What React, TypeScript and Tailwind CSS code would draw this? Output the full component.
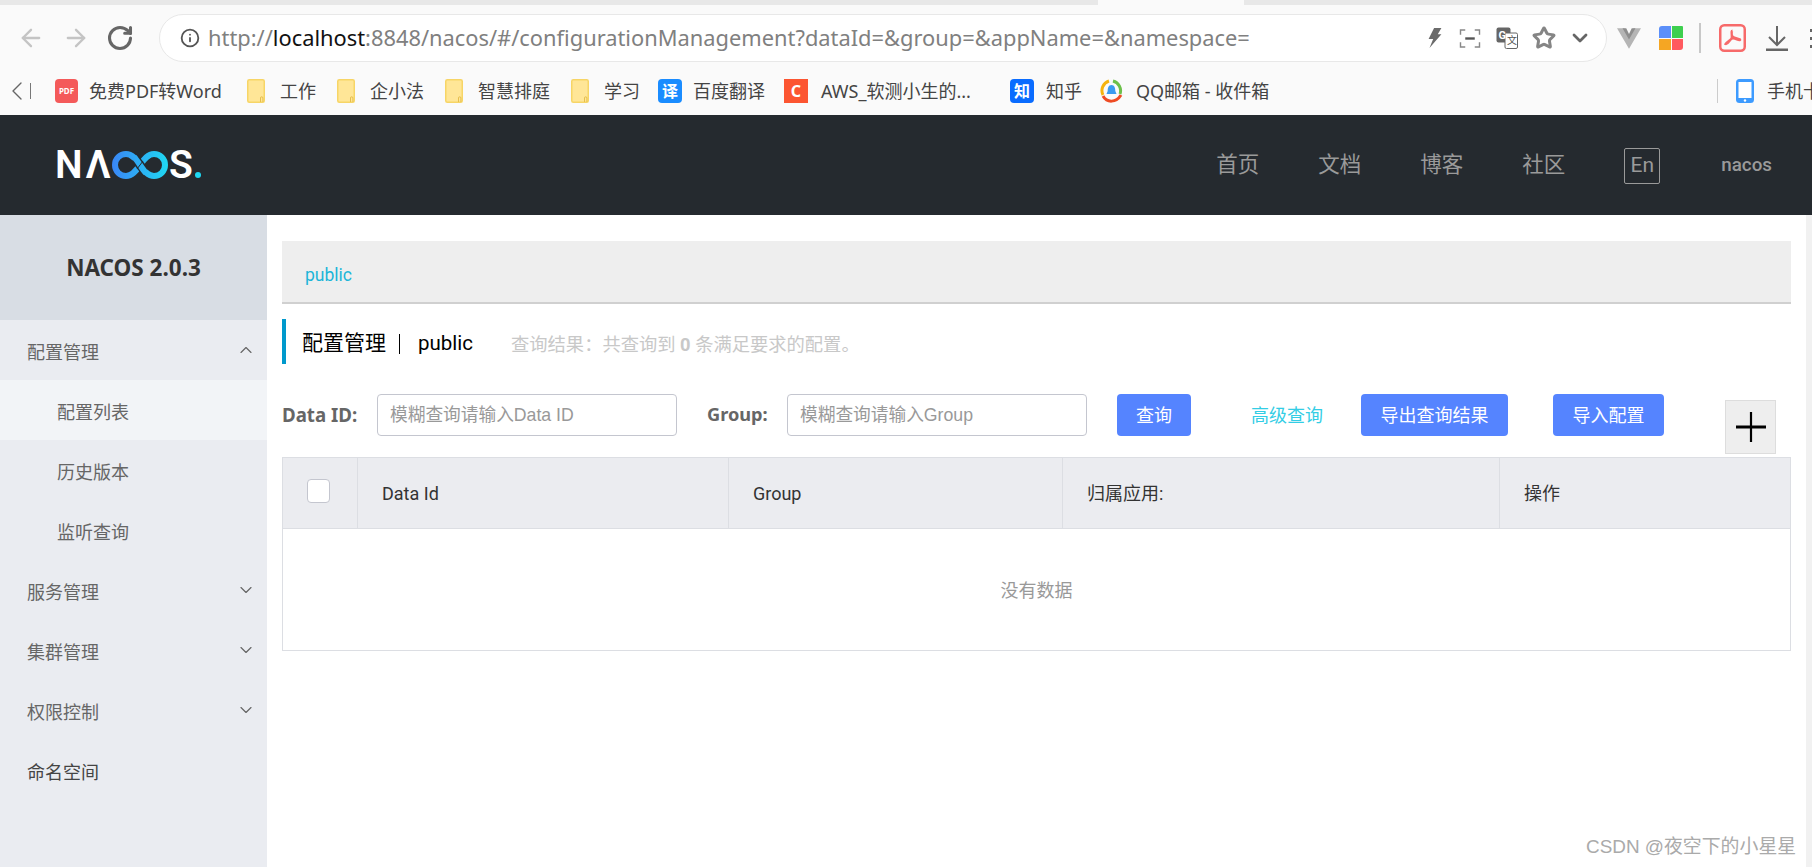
import React from "react";
import { ArrowLeft, ArrowRight, ChevronDown, ChevronLeft, ChevronUp, Info, RotateCw, Star } from "lucide-react";

const Folder = () => (
  <svg width="18" height="24" viewBox="0 0 18 24" className="shrink-0">
    <rect x="0.75" y="0.75" width="16.5" height="22.5" rx="1.5" fill="#ffe697" stroke="#f7d566" strokeWidth="1.5" />
    <path d="M13.5 23v-4a1.2 1.2 0 0 1 2.4 0v4" fill="none" stroke="#e6bf4d" strokeWidth="1" />
  </svg>
);

const PdfIcon = () => (
  <div className="flex h-[24px] w-[23px] shrink-0 items-center justify-center rounded-[4px] bg-[#f45a5a] text-[8px] font-bold text-white">
    PDF
  </div>
);

const SquareIcon = ({ label, className }: { label: string; className: string }) => (
  <div className={`flex h-[24px] w-[24px] shrink-0 items-center justify-center text-[16px] font-bold text-white ${className}`}>
    {label}
  </div>
);

const QQIcon = () => (
  <svg width="23" height="24" viewBox="0 0 23 24" className="shrink-0">
    <path d="M3 16A10 10 0 0 1 9 2" fill="none" stroke="#f5b30f" strokeWidth="3" />
    <path d="M13 2a10 10 0 0 1 7 13" fill="none" stroke="#6cc04a" strokeWidth="3" />
    <path d="M3 17c4 7 13 7 18-1" fill="none" stroke="#ee4b23" strokeWidth="3" />
    <path d="M11.5 6c3 0 3.8 3 3.8 6l1.2 3h-10l1.2-3c0-3 .8-6 3.8-6z" fill="#3a9bf0" />
  </svg>
);

const PhoneIcon = () => (
  <svg width="18" height="24" viewBox="0 0 18 24" className="shrink-0">
    <rect x="0" y="0" width="18" height="24" rx="3.5" fill="#3d9bff" />
    <rect x="2.5" y="3" width="13" height="16" fill="#fff" />
    <circle cx="9" cy="21.5" r="1.2" fill="#fff" />
  </svg>
);

const bookmarks = [
  { icon: <PdfIcon />, label: "免费PDF转Word", cls: "w-[192px] gap-[11px]" },
  { icon: <Folder />, label: "工作", cls: "w-[90px] gap-[15px]" },
  { icon: <Folder />, label: "企小法", cls: "w-[108px] gap-[15px]" },
  { icon: <Folder />, label: "智慧排庭", cls: "w-[126px] gap-[15px]" },
  { icon: <Folder />, label: "学习", cls: "w-[87px] gap-[15px]" },
  { icon: <SquareIcon label="译" className="rounded-[4px] bg-[#1a8cff]" />, label: "百度翻译", cls: "w-[126px] gap-[11px]" },
  { icon: <SquareIcon label="C" className="bg-[#fc5531]" />, label: "AWS_软测小生的...", cls: "w-[226px] gap-[13px]" },
  { icon: <SquareIcon label="知" className="rounded-[4px] bg-[#0a6cff]" />, label: "知乎", cls: "w-[90px] gap-[12px]" },
  { icon: <QQIcon />, label: "QQ邮箱 - 收件箱", cls: "w-[173px] gap-[13px]" },
];

const BrowserChrome = () => (
  <div className="shrink-0 bg-[#fafafa] font-['Noto_Sans','Noto_Sans_CJK_SC',sans-serif]">
    <div className="flex h-[5px]">
      <div className="w-[1098px] bg-[#e8e8e8]" />
      <div className="w-[146px] bg-[#fafafa]" />
      <div className="flex-1 bg-[#e8e8e8]" />
    </div>
    <div className="flex h-[57px] items-start">
      <div className="mt-[9px] flex h-[47px] w-[159px] shrink-0 items-center pl-[17px]">
        <ArrowLeft size={28} strokeWidth={2} className="text-[#c4c4c4]" />
        <ArrowRight size={28} strokeWidth={2} className="ml-[17px] text-[#c4c4c4]" />
        <RotateCw size={28} strokeWidth={2.6} className="ml-[16px] text-[#666]" />
      </div>
      <div className="mt-[9px] flex h-[48px] w-[1448px] shrink-0 items-center rounded-full border border-[#e8e8e8] bg-white pl-[20px]">
        <Info size={20} strokeWidth={2.2} className="shrink-0 text-[#555]" />
        <div className="ml-[8px] whitespace-nowrap text-[21.85px] text-[#808080]">
          http://<span className="text-[#111]">localhost</span>:8848/nacos/#/configurationManagement?dataId=&group=&appName=&namespace=
        </div>
      </div>
    </div>
    <div className="relative flex h-[53px] items-center overflow-hidden pt-[5px] text-[18px] text-[#444]">
      <div className="ml-[13px] flex w-[42px] shrink-0 items-center">
        <ChevronLeft size={32} strokeWidth={1} className="-ml-[12px] shrink-0 text-[#666]" />
        <span className="-ml-[3px] h-[16px] w-[1px] shrink-0 bg-[#777]" />
      </div>
      {bookmarks.map((b) => (
        <div key={b.label} className={`flex shrink-0 items-center whitespace-nowrap ${b.cls}`}>
          {b.icon}
          <span>{b.label}</span>
        </div>
      ))}
      <div className="ml-[444px] flex shrink-0 items-center whitespace-nowrap">
        <span className="h-[24px] w-[1px] bg-[#ccc]" />
        <span className="ml-[18px]"><PhoneIcon /></span>
        <span className="ml-[13px]">手机卡</span>
      </div>
    </div>
  </div>
);

const ToolbarIcons = () => (
  <div className="absolute left-[1427px] top-[14px] flex h-[48px] items-center">
    <svg width="16" height="22" viewBox="0 0 16 24">
      <polygon points="2,23 6,13 1,13 7,1 15,1 11,8 15,8" fill="#6b6b6b" />
    </svg>
    <svg width="22" height="19" viewBox="0 0 22 20" fill="none" stroke="#888" strokeWidth="1.5" className="ml-[16px]">
      <path d="M1 6V1h5M16 1h5v5M1 14v5h5M21 14v5h-5" />
      <path d="M6 10h10" stroke="#555" strokeWidth="2.5" />
    </svg>
    <svg width="22" height="22" viewBox="0 0 22 22" className="ml-[15px]">
      <rect x="0.5" y="0.5" width="14" height="15" rx="2" fill="#666" />
      <rect x="9" y="6" width="12.5" height="15.5" rx="1.5" fill="#fff" stroke="#666" />
      <text x="2.5" y="11.5" fontSize="11" fontWeight="700" fill="#fff" fontFamily="Roboto">G</text>
      <text x="11" y="17" fontSize="10" fill="#555" fontFamily="Noto Sans CJK SC">文</text>
    </svg>
    <Star size={24} strokeWidth={3} className="ml-[14px] text-[#858585]" />
    <ChevronDown size={24} strokeWidth={2.8} className="ml-[12px] text-[#666]" />
  </div>
);

const ExtensionIcons = () => (
  <div className="absolute left-[1617px] top-[23px] flex h-[30px] items-center">
    <svg width="24" height="21" viewBox="0 0 26 22">
      <polygon points="0,0 8,0 13,9 18,0 26,0 13,22" fill="#b5b5b5" />
      <polygon points="6,0 10,0 13,6 16,0 20,0 13,12" fill="#8e8e8e" />
    </svg>
    <div className="ml-[18px] grid h-[24px] w-[24px] grid-cols-2 gap-[1px]">
      <span className="rounded-tl-[3px] bg-[#5b8ff9]" />
      <span className="rounded-tr-[1px] bg-[#3ecf4f]" />
      <span className="bg-[#f5a623]" />
      <span className="rounded-br-[3px] bg-[#ff5a5f]" />
    </div>
    <span className="ml-[16px] h-[30px] w-[2px] bg-[#c8c8c8]" />
    <svg width="27" height="28" viewBox="0 0 27 28" className="ml-[18px]" fill="none" stroke="#f76a6a">
      <rect x="1.25" y="1.25" width="24.5" height="25.5" rx="4" strokeWidth="2.5" />
      <path d="M13.5 6.5c-2 0 0 6-1 8s-5 3-6 5.5c3 1 4-5 7-5.5s6 2.5 7.5 1.5-6-1.500-7.500-3.500-.5-6 0-6z" strokeWidth="2.2" />
    </svg>
    <svg width="22" height="26" viewBox="0 0 22 26" className="ml-[20px]" fill="none" stroke="#666">
      <path d="M11 1v18M3 12l8 8 8-8" strokeWidth="2" />
      <path d="M0 25h22" strokeWidth="3" />
    </svg>
    <span className="ml-[22px] flex flex-col gap-[5px]">
      <span className="h-[3px] w-[3px] bg-[#666]" />
      <span className="h-[3px] w-[3px] bg-[#666]" />
      <span className="h-[3px] w-[3px] bg-[#666]" />
    </span>
  </div>
);

const Logo = () => (
  <div className="ml-[55px] flex h-[28px] items-center text-[39px] font-semibold leading-none text-white">
    <span className="w-[57px] shrink-0 tracking-[3px]">NΛ</span>
    <svg width="56" height="28" viewBox="0 0 56 28" className="shrink-0" fill="none">
      <defs>
        <linearGradient id="inf" gradientUnits="userSpaceOnUse" x1="0" x2="56" y1="0" y2="0">
          <stop offset="0" stopColor="#3a86f6" />
          <stop offset="1" stopColor="#1fd8f2" />
        </linearGradient>
      </defs>
      <path d="M28 14C24 8 20 3 14 3a11 11 0 0 0 0 22c6 0 10-5 14-11s8-11 14-11a11 11 0 0 1 0 22c-6 0-10-5-14-11z" stroke="url(#inf)" strokeWidth="6" />
      <path d="M23 7.500l10 13" stroke="#252a2f" strokeWidth="9" />
      <path d="M22 6C24 8 26 11 28 14s4 6 6 8" stroke="url(#inf)" strokeWidth="6" />
      <path d="M25 18c1-1.300 2-2.600 3-4s2-2.700 3-4" stroke="#252a2f" strokeWidth="1" />
    </svg>
    <span className="ml-[1px]">S</span>
    <span className="ml-[2px] mt-[19px] h-[6px] w-[6px] rounded-full bg-[#1fd8f2]" />
  </div>
);

const TopNav = () => (
  <header className="flex h-[100px] shrink-0 items-center bg-[#252a2f]">
    <Logo />
    <nav className="ml-auto flex items-center gap-[59px] pr-[40px] pt-[1px] text-[#9a9a9a]">
      <a className="text-[21.5px]">首页</a>
      <a className="text-[21.5px]">文档</a>
      <a className="text-[21.5px]">博客</a>
      <a className="text-[21.5px]">社区</a>
      <a className="flex h-[36px] w-[36px] items-center justify-center rounded-[2px] border border-[#9a9a9a] text-[21px]">En</a>
      <a className="ml-[2px] text-[18.8px] font-medium">nacos</a>
    </nav>
  </header>
);

const menu = [
  { label: "配置管理", chevron: "up" },
  { label: "配置列表", sub: true, active: true },
  { label: "历史版本", sub: true },
  { label: "监听查询", sub: true },
  { label: "服务管理", chevron: "down" },
  { label: "集群管理", chevron: "down" },
  { label: "权限控制", chevron: "down" },
  { label: "命名空间", dark: true },
];

const Sidebar = () => (
  <aside className="w-[267px] shrink-0 bg-[#eaecf1]">
    <div className="flex h-[105px] items-center justify-center bg-[#d8dde4] pt-[1px] font-['Noto_Sans',sans-serif] text-[22.5px] font-bold text-[#333]">NACOS 2.0.3</div>
    {menu.map((m) => (
      <div
        key={m.label}
        className={`flex h-[60px] items-center text-[18px] ${m.sub ? "pl-[57px]" : "pl-[27px]"} ${m.active ? "bg-[#f2f4f7]" : ""} ${m.dark ? "text-[#444]" : "text-[#666]"}`}
      >
        <span className="mt-[4px]">{m.label}</span>
        {m.chevron === "up" && <ChevronUp size={20} strokeWidth={1.4} className="ml-auto mr-[11px] text-[#666]" />}
        {m.chevron === "down" && <ChevronDown size={20} strokeWidth={1.4} className="ml-auto mr-[11px] text-[#666]" />}
      </div>
    ))}
  </aside>
);

const FormInput = ({ placeholder }: { placeholder: string }) => (
  <div className="flex h-[42px] w-[300px] shrink-0 items-center rounded-[4px] border border-[#c4c6cf] bg-white pl-[12px] font-['Liberation_Sans','Noto_Sans_CJK_SC',sans-serif] text-[17.7px] text-[#999]">
    {placeholder}
  </div>
);

const BlueButton = ({ label, className }: { label: string; className: string }) => (
  <button className={`flex h-[42px] shrink-0 items-center justify-center rounded-[4px] bg-[#5584ff] text-[18px] text-white ${className}`}>
    {label}
  </button>
);

const columns = [
  { label: "Data Id", cls: "w-[371px]" },
  { label: "Group", cls: "w-[334px]" },
  { label: "归属应用:", cls: "w-[437px]" },
  { label: "操作", cls: "flex-1" },
];

const Main = () => (
  <main className="flex-1 pl-[15px] pr-[15px] pt-[26px]">
    <div className="flex h-[63px] items-center border-b-2 border-[#d0d0d0] bg-[#eeeeee] pl-[23px] text-[17.5px] text-[#1cb5d8]">
      <span className="mt-[7px]">public</span>
    </div>
    <div className="mt-[15px] flex h-[45px] items-center border-l-4 border-[#09c] pl-[16px] pt-[4px]">
      <span className="text-[21px] text-[#000]">配置管理</span>
      <span className="ml-[13px] h-[20px] w-[1px] bg-[#000]" />
      <span className="ml-[18px] text-[20.5px] text-[#000]">public</span>
      <span className="ml-[38px] mt-[2px] text-[18.3px] text-[#c8c8c8]">
        查询结果：共查询到 <b className="font-bold">0</b> 条满足要求的配置。
      </span>
    </div>
    <div className="mt-[30px] flex h-[42px] items-start">
      <label className="flex h-[42px] w-[95px] shrink-0 items-center font-['Noto_Sans',sans-serif] text-[18.7px] font-bold text-[#666]">Data ID:</label>
      <FormInput placeholder="模糊查询请输入Data ID" />
      <label className="ml-[30px] flex h-[42px] w-[80px] shrink-0 items-center font-['Noto_Sans',sans-serif] text-[18.2px] font-bold text-[#666]">Group:</label>
      <FormInput placeholder="模糊查询请输入Group" />
      <BlueButton label="查询" className="ml-[30px] w-[74px]" />
      <a className="ml-[60px] flex h-[42px] shrink-0 items-center text-[18px] text-[#33cde5]">高级查询</a>
      <BlueButton label="导出查询结果" className="ml-[38px] w-[147px]" />
      <BlueButton label="导入配置" className="ml-[45px] w-[111px]" />
      <div className="ml-[61px] mt-[6px] flex h-[54px] w-[51px] shrink-0 items-center justify-center border border-[#ddd] bg-[#eee]">
        <svg width="32" height="32" viewBox="0 0 32 32" stroke="#000">
          <path d="M1 16h30" strokeWidth="3" />
          <path d="M16 1v30" strokeWidth="2.2" />
        </svg>
      </div>
    </div>
    <div className="mt-[21px] border border-[#dcdee3]">
      <div className="flex h-[71px] items-stretch border-b border-[#dcdee3] bg-[#ebecf0] text-[18px] text-[#333]">
        <div className="flex w-[74px] shrink-0 items-center pb-[5px] pl-[24px]">
          <span className="block h-[24px] w-[23px] rounded-[4px] border border-[#c4c6cf] bg-white" />
        </div>
        {columns.map((c) => (
          <div key={c.label} className={`flex shrink-0 items-center border-l border-[#dcdee3] pl-[24px] ${c.cls}`}>
            {c.label}
          </div>
        ))}
      </div>
      <div className="flex h-[121px] items-center justify-center pt-[1px] text-[18px] text-[#999]">没有数据</div>
    </div>
  </main>
);

export default function App() {
  return (
    <div className="relative flex h-[867px] w-[1812px] flex-col overflow-hidden bg-white font-['Roboto','Noto_Sans_CJK_SC',sans-serif]">
      <BrowserChrome />
      <ToolbarIcons />
      <ExtensionIcons />
      <TopNav />
      <div className="flex flex-1">
        <Sidebar />
        <Main />
        <div className="w-[6px] shrink-0 bg-[#f1f1f1]" />
      </div>
      <div className="absolute left-[1586px] top-[833px] font-['Liberation_Sans','Noto_Sans_CJK_SC',sans-serif] text-[18.9px] text-[#aaa]">CSDN @夜空下的小星星</div>
    </div>
  );
}
